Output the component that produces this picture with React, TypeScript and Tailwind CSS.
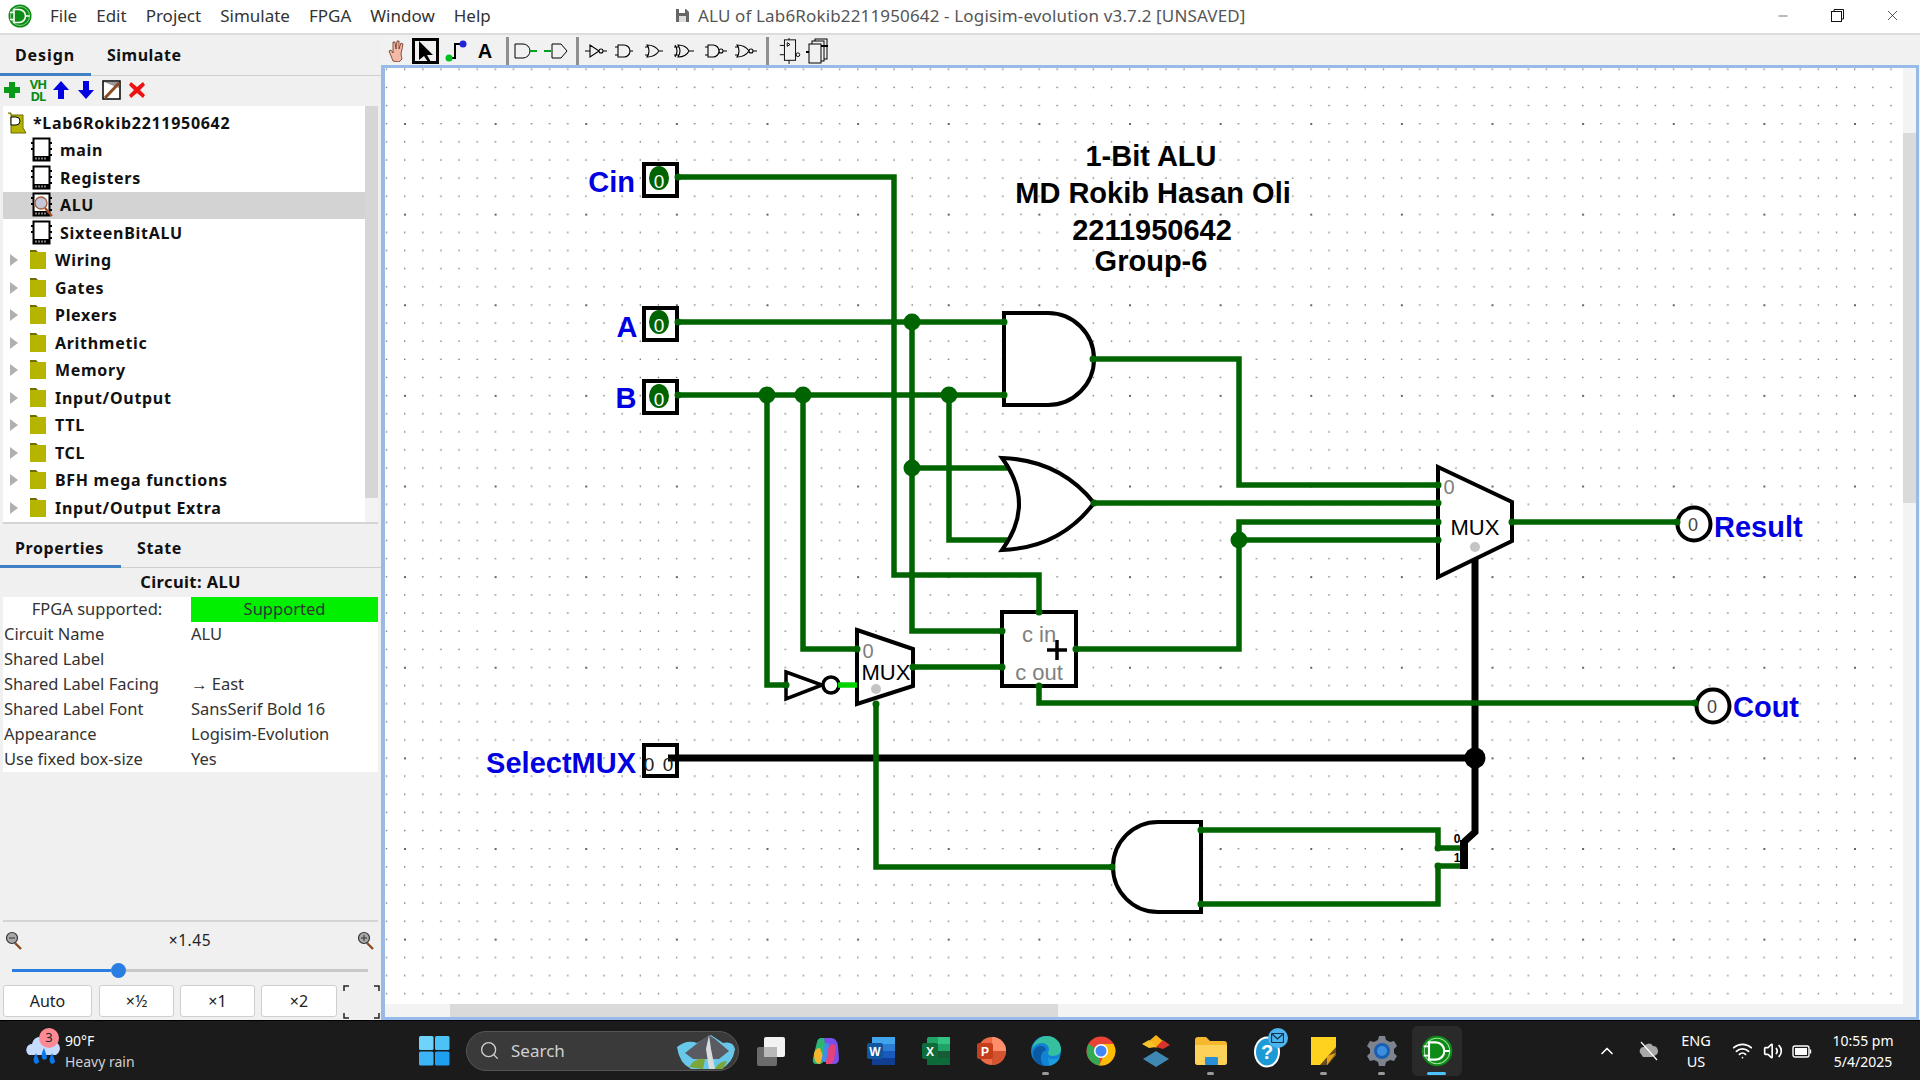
import { ChevronUp, Minus, Search, Volume2, Wifi, X } from "lucide-react";

const MENU = ["File", "Edit", "Project", "Simulate", "FPGA", "Window", "Help"];
const CIRCUITS = ["main", "Registers", "ALU", "SixteenBitALU"];
const LIBS = ["Wiring", "Gates", "Plexers", "Arithmetic", "Memory", "Input/Output", "TTL", "TCL", "BFH mega functions", "Input/Output Extra"];
const PROPS = [
    ["Circuit Name", "ALU"],
    ["Shared Label", ""],
    ["Shared Label Facing", "→ East"],
    ["Shared Label Font", "SansSerif Bold 16"],
    ["Appearance", "Logisim-Evolution"],
    ["Use fixed box-size", "Yes"],
];

const WIRES = [
    "M678 177H894V575H1039V612",
    "M678 322H1004",
    "M678 395H1004",
    "M912 322V631H1002",
    "M912 468H1008",
    "M949 395V540H1008",
    "M767 395V685H786",
    "M803 395V649H857",
    "M913 667H1002",
    "M1076 649H1239V522H1438",
    "M1239 540H1438",
    "M1094 503H1438",
    "M1093 359H1239V485H1438",
    "M1512 522H1677",
    "M1039 686V703H1695",
    "M1201 830H1438V848H1460",
    "M1201 904H1438V866H1460",
];

const JUNCTIONS = [[912, 322], [912, 468], [767, 395], [803, 395], [949, 395], [1239, 540]];
const WIRE_ENDS = [
    [1002, 631], [1002, 667], [913, 667], [857, 649], [1039, 612], [1039, 686], [1076, 649],
    [1438, 485], [1438, 503], [1438, 522], [1438, 540], [1512, 522], [1004, 322], [1004, 395],
    [1093, 359], [1094, 503], [1201, 830], [1201, 904], [1112, 867], [678, 177], [678, 322], [678, 395],
    [876, 704], [1438, 848], [1438, 866], [1677, 522], [1695, 703], [786, 685],
];

function LogisimLogo({ size }: { size: number }) {
    return (
        <svg width={size} height={size} viewBox="0 0 24 24">
            <circle cx="12" cy="12" r="11.5" fill="#0e8a16" />
            <circle cx="12" cy="12" r="9.5" fill="none" stroke="#9fe29f" strokeWidth="0.8" />
            <path d="M6 5.5h5a6.5 6.5 0 0 1 0 13H6z" fill="#0e8a16" stroke="#fff" strokeWidth="1.6" />
            <path d="M2 8.5h4M2 15.5h4M17.5 12h4" stroke="#fff" strokeWidth="1.4" />
        </svg>
    );
}

function ChipIcon({ lens }: { lens?: boolean }) {
    return (
        <svg width="22" height="26" viewBox="0 0 22 26" className="shrink-0">
            <rect x="2.5" y="1.5" width="16" height="22" fill="#fff" stroke="#000" strokeWidth="2" />
            <path d="M0 6h3M0 12h3M18 6h3M18 12h3M18 18h3" stroke="#000" strokeWidth="2" />
            <rect x="2" y="19" width="17" height="5" fill="#000" />
            <path d="M5 20.5v2M8 20.5v2M11 20.5v2M14 20.5v2" stroke="#fff" strokeWidth="1" />
            {lens && <circle cx="10" cy="11" r="6" fill="#c5c8dc" stroke="#a5613a" strokeWidth="1.3" />}
            {lens && <path d="M14 16l7 8" stroke="#a5502a" strokeWidth="2.4" />}
        </svg>
    );
}

function FolderIcon() {
    return (
        <svg width="17" height="20" viewBox="0 0 17 20" className="shrink-0">
            <path d="M0 0h6l2 2H0z" fill="#6f6d00" />
            <rect y="2" width="16" height="17" fill="#b5b500" />
        </svg>
    );
}

function GateIcon({ d, w = 30 }: { d: string; w?: number }) {
    return (
        <svg width={w} height="24" viewBox={`0 0 ${w} 24`} fill="none" stroke="#000" strokeWidth="1.1">
            <path d={d} />
        </svg>
    );
}

function ZoomIcon({ plus }: { plus?: boolean }) {
    return (
        <svg width="18" height="20" viewBox="0 0 18 20">
            <path d="M10 12l6 6" stroke="#8a4b20" strokeWidth="2.4" />
            <circle cx="7" cy="7" r="5.5" fill="#a8a8a8" stroke="#333" strokeWidth="1.2" />
            <path d={plus ? "M4 7h6M7 4v6" : "M4 7h6"} stroke="#333" strokeWidth="1" />
        </svg>
    );
}

function TaskIcon({ children, active, dot }: { children: React.ReactNode; active?: boolean; dot?: boolean }) {
    return (
        <div className={active ? "relative flex items-center justify-center w-[50px] h-[50px] mx-[2.5px] rounded-md bg-[#2a2a2a]" : "relative flex items-center justify-center w-[55px] h-[50px]"}>
            {children}
            {dot && <span className="absolute bottom-[1px] w-[7px] h-[3px] rounded-full bg-[#9a9a9a]" />}
            {active && <span className="absolute bottom-[1px] w-[19px] h-[3px] rounded-full bg-[#4cc2ff]" />}
        </div>
    );
}

function Circuit() {
    return (
        <svg viewBox="385 68 1518 936" className="w-[1518px] h-[936px] block" fontFamily="'Liberation Sans', Arial, sans-serif">
            <defs>
                <pattern id="grid" x="404" y="123" width="90.625" height="90.625" patternUnits="userSpaceOnUse">
                    {[0, 1, 2, 3, 4].flatMap(i => [0, 1, 2, 3, 4].map(j => (
                        <rect key={`${i}-${j}`} x={i * 18.125} y={j * 18.125} width={i + j === 0 ? 2 : 1.4} height={i + j === 0 ? 2 : 1.4} fill={i + j === 0 ? "#666" : "#777"} />
                    )))}
                </pattern>
            </defs>
            <rect x="385" y="68" width="1518" height="936" fill="#fff" />
            <rect x="385" y="68" width="1518" height="936" fill="url(#grid)" />

            {/* bus */}
            <path d="M678 758H1475M1475 557V832L1464 842" fill="none" stroke="#000" strokeWidth="7" />
            <rect x="1460" y="840" width="8" height="29" fill="#000" />
            <circle cx="1475" cy="758" r="10.5" fill="#000" />
            <text x="1457" y="843" fontSize="12" fontWeight="700" textAnchor="middle">0</text>
            <text x="1457" y="862" fontSize="12" fontWeight="700" textAnchor="middle">1</text>

            {/* wires */}
            <path d="M876 704V867H1112" fill="none" stroke="#006400" strokeWidth="5.5" />
            {WIRES.map(d => <path key={d} d={d} fill="none" stroke="#006400" strokeWidth="5.5" />)}
            {JUNCTIONS.map(([x, y]) => <circle key={`${x}-${y}`} cx={x} cy={y} r="8.5" fill="#006400" />)}

            {/* gates */}
            <g fill="#fff" stroke="#000" strokeWidth="4">
                <path d="M1004 313H1048A46 46 0 0 1 1048 405H1004Z" />
                <path d="M1002 458Q1036 504 1002 550Q1060 548 1094 503Q1060 460 1002 458Z" />
                <path d="M1201 822H1158A45 45 0 0 0 1158 912H1201Z" />
                <path d="M857 630L913 649V686L857 704Z" />
                <path d="M1438 467L1512 502V541L1438 577Z" />
                <rect x="1002" y="612" width="74" height="74" />
                <path d="M786 672L822 685L786 699Z" strokeWidth="3.5" />
                <circle cx="831" cy="685" r="8" strokeWidth="3.5" />
                <rect x="644" y="164" width="33" height="32" />
                <rect x="644" y="308" width="33" height="32" />
                <rect x="644" y="381" width="33" height="32" />
                <rect x="644" y="745" width="33" height="31" />
                <circle cx="1694" cy="524" r="16.5" />
                <circle cx="1713" cy="706" r="16.5" />
            </g>
            <path d="M838 685H857" stroke="#00d200" strokeWidth="5.5" />
            <path d="M678 758H668" stroke="#000" strokeWidth="7" />
            {WIRE_ENDS.map(([x, y]) => <circle key={`${x}_${y}`} cx={x} cy={y} r="3.5" fill="#006400" />)}
            <circle cx="876" cy="689" r="5" fill="#c4c4c4" />
            <circle cx="1475" cy="547" r="5" fill="#c4c4c4" />

            {/* pins */}
            {[178, 322, 396].map(y => (
                <g key={y}>
                    <ellipse cx="659" cy={y} rx="10" ry="12" fill="#006400" />
                    <text x="659" y={y + 10} fontSize="19" fill="#fff" textAnchor="middle">0</text>
                </g>
            ))}
            <text x="649" y="771" fontSize="19" fill="#222" textAnchor="middle">0</text>
            <text x="668" y="771" fontSize="19" fill="#222" textAnchor="middle">0</text>
            <text x="1693" y="531" fontSize="18" fill="#444" textAnchor="middle">0</text>
            <text x="1712" y="713" fontSize="18" fill="#444" textAnchor="middle">0</text>

            {/* component labels */}
            <text x="886" y="680" fontSize="22" textAnchor="middle">MUX</text>
            <text x="1475" y="535" fontSize="22" textAnchor="middle">MUX</text>
            <text x="868" y="658" fontSize="20" fill="#808080" textAnchor="middle">0</text>
            <text x="1449" y="494" fontSize="20" fill="#808080" textAnchor="middle">0</text>
            <text x="1039" y="642" fontSize="22" fill="#808080" textAnchor="middle">c in</text>
            <text x="1039" y="680" fontSize="22" fill="#808080" textAnchor="middle">c out</text>
            <path d="M1047 650H1067M1057 640V660" stroke="#000" strokeWidth="3.5" />

            {/* labels */}
            <g fill="#0000e0" fontWeight="700" fontSize="29">
                <text x="635" y="192" textAnchor="end">Cin</text>
                <text x="637.5" y="337" textAnchor="end">A</text>
                <text x="636.5" y="408" textAnchor="end">B</text>
                <text x="636" y="773" textAnchor="end">SelectMUX</text>
                <text x="1714" y="537">Result</text>
                <text x="1733" y="717">Cout</text>
            </g>
            <g fontWeight="700" fontSize="29" textAnchor="middle" fill="#000">
                <text x="1151" y="166">1-Bit ALU</text>
                <text x="1153" y="203">MD Rokib Hasan Oli</text>
                <text x="1152" y="240">2211950642</text>
                <text x="1151" y="271">Group-6</text>
            </g>
        </svg>
    );
}

function TitleBar() {
    return (
        <div className="flex items-center h-[33px] pb-[2px] bg-white text-[17px] text-[#333]">
            <div className="w-[50px] pl-[8px]"><LogisimLogo size={24} /></div>
            <div className="flex gap-[19px] w-[625px]">
                {MENU.map(m => <span key={m}>{m}</span>)}
            </div>
            <div className="flex items-center gap-[8px] tracking-[0.15px] text-[#555]">
                <svg width="15" height="15" viewBox="0 0 15 15"><path d="M1 1h10l3 3v10H1z" fill="#666" /><rect x="4" y="1" width="6" height="4" fill="#fff" /><rect x="4" y="8" width="7" height="6" fill="#ddd" /></svg>
                <span>ALU of Lab6Rokib2211950642 - Logisim-evolution v3.7.2 [UNSAVED]</span>
            </div>
            <div className="ml-auto flex items-center text-[#111]">
                <div className="w-[55px] flex justify-center"><Minus size={14} strokeWidth={1} /></div>
                <div className="w-[55px] flex justify-center">
                    <svg width="13" height="13" viewBox="0 0 13 13" fill="none" stroke="#111"><rect x="0.5" y="2.5" width="10" height="10" /><path d="M3 2.5V.5h9.5v9.5h-2" /></svg>
                </div>
                <div className="w-[55px] pr-[1px] flex justify-center"><X size={17} strokeWidth={1} /></div>
            </div>
        </div>
    );
}

function Sidebar() {
    return (
        <div className="w-[381px] flex flex-col bg-[#f0f0f0] font-['Noto_Sans',sans-serif]">
            <div className="relative flex h-[41px] border-b border-[#cfcfcf] font-bold text-[16px] text-[#111]">
                <span className="absolute left-[15px] top-[8px] tracking-[0.9px]">Design</span>
                <span className="absolute left-[107px] top-[8px] tracking-[0.5px]">Simulate</span>
                <span className="absolute left-0 bottom-[-1px] w-[91px] h-[3px] bg-[#3f7fc4]" />
            </div>
            <div className="flex items-center h-[30px] pb-[2px] pl-[3px]">
                <svg width="18" height="18" viewBox="0 0 18 18" className="mr-[6px]"><path d="M6 1h6v5h5v6h-5v5H6v-5H1V6h5z" fill="#0a9a1a" /></svg>
                <div className="w-[22px] mr-[3px] text-[13px] leading-[12px] font-bold text-[#0a8a1a] tracking-[-1px] text-center">VH<br />DL</div>
                <svg width="18" height="20" viewBox="0 0 18 20" className="mr-[7px]"><path d="M9 1l8 9h-5v9H6v-9H1z" fill="#0000e0" /></svg>
                <svg width="18" height="20" viewBox="0 0 18 20" className="mr-[7px]"><path d="M9 19l8-9h-5V1H6v9H1z" fill="#0000e0" /></svg>
                <svg width="19" height="20" viewBox="0 0 19 20" className="mr-[7px]"><rect x="1" y="1" width="17" height="18" fill="#fff" stroke="#000" strokeWidth="1.5" /><path d="M2 2l15 0 0 6z" fill="#9a9a9a" /><path d="M3 18L17 3" stroke="#8a4b20" strokeWidth="3" /></svg>
                <svg width="18" height="18" viewBox="0 0 18 18"><path d="M3 1l6 5 6-5 2 3-5 5 5 5-2 3-6-5-6 5-2-3 5-5-5-5z" fill="#ee1111" /></svg>
            </div>

            <div className="flex h-[418px] mx-[3px] bg-white border-b-2 border-[#d4d4d4] font-bold text-[16px] tracking-[0.7px] text-[#111]">
                <div className="flex-1 flex flex-col pt-[3px] overflow-hidden">
                    <div className="flex items-center h-[27.5px] pl-[4px] gap-[6px]">
                        <svg width="20" height="22" viewBox="0 0 20 22" className="shrink-0"><path d="M1 1h3v20h15l-3-5V3H4" fill="#b5b500" stroke="#6f6d00" strokeWidth="1" /><path d="M4 5h5a4 4 0 0 1 0 8H4z" fill="#fff" stroke="#000" /></svg>
                        <span>*Lab6Rokib2211950642</span>
                    </div>
                    {CIRCUITS.map(c => (
                        <div key={c} className={c === "ALU" ? "flex items-center h-[27.5px] pl-[28px] gap-[7px] bg-[#d3d3d3]" : "flex items-center h-[27.5px] pl-[28px] gap-[7px]"}>
                            <ChipIcon lens={c === "ALU"} />
                            <span>{c}</span>
                        </div>
                    ))}
                    {LIBS.map(l => (
                        <div key={l} className="flex items-center h-[27.5px] pl-[6px]">
                            <svg width="10" height="14" viewBox="0 0 10 14" className="mr-[11px] shrink-0"><path d="M1 1l8 6-8 6z" fill="#b0b0b0" /></svg>
                            <FolderIcon />
                            <span className="ml-[8px]">{l}</span>
                        </div>
                    ))}
                </div>
                <div className="w-[13px] bg-[#f3f3f3]"><div className="h-[392px] bg-[#d6d6d6]" /></div>
            </div>

            <div className="relative h-[44px] border-b border-[#cfcfcf] font-bold text-[16px] tracking-[0.6px] text-[#111]">
                <span className="absolute left-[15px] top-[12px]">Properties</span>
                <span className="absolute left-[137px] top-[12px]">State</span>
                <span className="absolute left-0 bottom-[-1px] w-[121px] h-[3px] bg-[#3f7fc4]" />
            </div>
            <div className="flex items-center justify-center h-[29px] font-bold text-[16.5px] tracking-[0.4px] text-[#111]">Circuit: ALU</div>

            <div className="flex flex-col h-[325px] mx-[3px] border-b-2 border-[#d4d4d4] text-[16.5px] text-[#333]">
                <div className="bg-white">
                    <div className="grid grid-cols-[188px_1fr] items-center h-[25px]">
                        <span className="text-center">FPGA supported:</span>
                        <span className="h-full flex items-center justify-center bg-[#00f000]">Supported</span>
                    </div>
                    {PROPS.map(([k, v]) => (
                        <div key={k} className="grid grid-cols-[187px_1fr] items-center h-[25px] pl-[1px]">
                            <span>{k}</span>
                            <span>{v}</span>
                        </div>
                    ))}
                </div>
            </div>

            <div className="flex items-center justify-between h-[38px] pl-[5px] pr-[6px] text-[15.5px] text-[#222]">
                <ZoomIcon />
                <span className="tracking-[0.6px]">×1.45</span>
                <ZoomIcon plus />
            </div>
            <div className="flex items-center h-[20px] pl-[12px] pr-[13px]">
                <div className="h-[3px] w-[99px] bg-[#2a7de1]" />
                <div className="w-[15px] h-[15px] rounded-full bg-[#2a7de1] shrink-0" />
                <div className="h-[3px] flex-1 bg-[#c8c8c8]" />
            </div>
            <div className="flex items-start gap-[6px] mt-[5px] pl-[3px] text-[16px] text-[#222]">
                <button className="w-[89px] h-[32px] bg-white border border-[#cfcfcf] rounded-[3px]">Auto</button>
                <button className="w-[75px] h-[32px] ml-[1px] bg-white border border-[#cfcfcf] rounded-[3px]">×½</button>
                <button className="w-[75px] h-[32px] bg-white border border-[#cfcfcf] rounded-[3px]">×1</button>
                <button className="w-[76px] h-[32px] bg-white border border-[#cfcfcf] rounded-[3px]">×2</button>
                <svg width="37" height="34" viewBox="0 0 37 34" fill="none" stroke="#222" strokeWidth="1.5"><path d="M1 6V1h5M36 6V1h-5M1 28v5h5M36 28v5h-5" /></svg>
            </div>
        </div>
    );
}

function Toolbar() {
    return (
        <div className="flex items-center h-[30px] pt-[2px] bg-[#f1f1f1]">
            <div className="w-[30px] flex justify-center">
                <svg width="16" height="22" viewBox="0 0 16 22"><path d="M5 21L1 11l2-1 2 3V2l2 0 1 7 1-8 2 0 0 8 2-6 2 1-2 10 1 5-3 3z" fill="#f3b9a5" stroke="#6b2f1e" strokeWidth="0.8" /></svg>
            </div>
            <div className="w-[27px] h-[26px] ml-[1px] flex items-center justify-center border-[3px] border-black">
                <svg width="17" height="21" viewBox="0 0 17 21"><path d="M2 0l14 14h-6l4 7-3 0-4-6-5 4z" fill="#000" /></svg>
            </div>
            <div className="w-[34px] flex justify-center">
                <svg width="22" height="22" viewBox="0 0 22 22" fill="none"><path d="M4 18h6V4h8" stroke="#000" strokeWidth="2" /><circle cx="4" cy="18" r="3.5" fill="#00c020" /><circle cx="18" cy="4" r="3.5" fill="#2222dd" /></svg>
            </div>
            <div className="w-[24px] text-center text-[20px] font-bold font-['Liberation_Sans',sans-serif]">A</div>
            <div className="w-[9px]" />
            <div className="w-[3px] h-[28px] bg-[#8f8f8f]" />
            <div className="w-[34px] flex justify-center">
                <svg width="24" height="20" viewBox="0 0 24 20" fill="none"><path d="M1 3h8a7 7 0 0 1 0 14H1z" stroke="#000" /><path d="M16 10h7" stroke="#00a020" strokeWidth="2" /></svg>
            </div>
            <div className="w-[26px] flex justify-center">
                <svg width="24" height="20" viewBox="0 0 24 20" fill="none"><path d="M8 3h9l6 7-6 7H8z" stroke="#000" /><path d="M0 10h7" stroke="#00a020" strokeWidth="2" /></svg>
            </div>
            <div className="w-[7px]" />
            <div className="w-[3px] h-[28px] bg-[#8f8f8f]" />
            <div className="w-[2px]" />
            <div className="w-[30px] flex justify-center"><GateIcon w={22} d="M0 12h5M5 6v12l9-6zM14 12a2 2 0 1 0 4 0a2 2 0 1 0-4 0M18 12h4" /></div>
            <div className="w-[26px] flex justify-center"><GateIcon w={18} d="M0 8h3M0 16h3M3 6h6a6 6 0 0 1 0 12H3zM15 12h3" /></div>
            <div className="w-[34px] flex justify-center"><GateIcon w={18} d="M0 8h4M0 16h4M2 6q4 6 0 12q8 0 12-6q-4-6-12-6zM14 12h4" /></div>
            <div className="w-[26px] flex justify-center"><GateIcon w={20} d="M0 8h5M0 16h5M1 6q4 6 0 12M4 6q4 6 0 12q8 0 11-6q-3-6-11-6zM15 12h5" /></div>
            <div className="w-[38px] flex justify-center"><GateIcon w={22} d="M0 8h3M0 16h3M3 6h5a6 6 0 0 1 0 12H3zM14 12a2 2 0 1 0 4 0a2 2 0 1 0-4 0M18 12h4" /></div>
            <div className="w-[22px] flex justify-center"><GateIcon w={22} d="M0 8h4M0 16h4M2 6q4 6 0 12q8 0 12-6q-4-6-12-6zM14 12a2 2 0 1 0 4 0a2 2 0 1 0-4 0M18 12h4" /></div>
            <div className="w-[9px]" />
            <div className="w-[3px] h-[28px] bg-[#8f8f8f]" />
            <div className="w-[6px]" />
            <div className="w-[30px] flex justify-center">
                <svg width="22" height="26" viewBox="0 0 22 28" fill="none" stroke="#000"><rect x="5" y="2" width="12" height="22" /><path d="M0 8h5M0 18h5M10 0v2M10 24v4M17 18h1" /><circle cx="19.5" cy="18" r="2" /><path d="M8 5l3 2-3 2z" /></svg>
            </div>
            <div className="w-[24px] flex justify-center">
                <svg width="22" height="26" viewBox="0 0 22 26" fill="none" stroke="#000"><rect x="9" y="1" width="12" height="20" /><rect x="6" y="3" width="12" height="20" fill="#f1f1f1" /><rect x="3" y="6" width="12" height="19" fill="#f1f1f1" /><path d="M0 14h3M15 8h7" strokeWidth="2" /></svg>
            </div>
        </div>
    );
}

function WeatherIcon() {
    return (
        <svg width="38" height="36" viewBox="0 0 38 36" className="shrink-0">
            <path d="M5 22a6 6 0 0 1 3-11a9 9 0 0 1 17-2a7 7 0 0 1 7 13z" fill="#c5dcff" />
            <path d="M12 20c-2 4-3 6-2 9s5 2 5-1zM20 15c-2 4-3 7-2 10s5 2 5-1zM28 20c-2 4-3 6-2 9s5 2 5-1z" fill="#0c78ee" />
        </svg>
    );
}

function Taskbar() {
    return (
        <div className="flex items-center h-[60px] border-t border-[#000] bg-[#1b1b1b] text-white font-['Noto_Sans',sans-serif]">
            <div className="relative flex items-center w-[419px] pl-[24px] gap-[3px]">
                <WeatherIcon />
                <span className="absolute left-[39px] top-[-2px] w-[20px] h-[20px] rounded-full bg-[#ff8a94] text-[#222] text-[13px] flex items-center justify-center">3</span>
                <div className="flex flex-col text-[14px] leading-[21px]">
                    <span>90°F</span>
                    <span className="text-[#cfcfcf]">Heavy rain</span>
                </div>
            </div>
            <svg width="31" height="30" viewBox="0 0 31 30" className="shrink-0">
                <rect width="14.5" height="14" rx="1.5" fill="#6fd4fb" />
                <rect x="16" width="14.5" height="14" rx="1.5" fill="#4cc2f7" />
                <rect y="15.5" width="14.5" height="14" rx="1.5" fill="#3db4f5" />
                <rect x="16" y="15.5" width="14.5" height="14" rx="1.5" fill="#1f9ff0" />
            </svg>
            <div className="flex items-center w-[273px] h-[40px] ml-[16px] pl-[12px] rounded-full bg-[#3a3a3a] border border-[#555] text-[#d0d0d0] text-[17px]">
                <Search size={21} strokeWidth={1.5} />
                <span className="ml-[11px]">Search</span>
                <svg width="62" height="36" viewBox="0 0 62 36" className="ml-auto mr-[1px]">
                    <path d="M2 14q10-8 20-4l14-8 12 8q10-2 12 6q-2 14-14 20H16Q4 30 2 14z" fill="#69c8ea" />
                    <path d="M10 20L24 9l10-7 6 4 14 12-10 8H18z" fill="#5a5a62" />
                    <path d="M34 2l-3 14 3 20h6l-4-20z" fill="#d8dde0" />
                    <path d="M14 34q6-10 16-8l-2 10zM40 36q4-8 12-8l-4 8z" fill="#7aa63a" />
                </svg>
            </div>
            <div className="flex items-center ml-[4px]">
                <TaskIcon>
                    <svg width="30" height="30" viewBox="0 0 30 30"><rect x="1" y="11" width="20" height="19" rx="2" fill="#6b6b6b" /><rect x="8" y="1" width="21" height="20" rx="2" fill="#f2f2f2" /><rect x="8" y="11" width="13" height="10" fill="#b8b8b8" /></svg>
                </TaskIcon>
                <TaskIcon>
                    <svg width="30" height="30" viewBox="0 0 30 30">
                        <path d="M10 2h7l-4 22q-1 4-5 4H5Q1 28 2 22L6 6q1-4 4-4z" fill="#2bb673" />
                        <path d="M3 20q0-8 6-8l3 8-3 8q-5 0-6-8z" fill="#f5b52e" />
                        <path d="M13 2h7q6 0 7 8l1 12q0 6-5 6h-6z" fill="#7a4ee8" />
                        <path d="M20 8q-6 6-5 20h3q4 0 5-4l2-12q0-4-5-4z" fill="#e5417c" />
                        <path d="M14 8l-3 14q-1 4 3 4h1l3-18q-2-2-4 0z" fill="#3a8ef0" />
                    </svg>
                </TaskIcon>
                <TaskIcon>
                    <svg width="30" height="30" viewBox="0 0 30 30"><rect x="6" y="1" width="23" height="28" rx="2" fill="#2b7cd3" /><rect x="6" y="1" width="23" height="7" fill="#41a5ee" /><rect x="6" y="15" width="23" height="7" fill="#185abd" /><rect x="6" y="22" width="23" height="7" fill="#103f91" /><rect x="1" y="7" width="16" height="16" rx="2" fill="#11559f" /><text x="9" y="20" fontSize="12" fontWeight="700" fill="#fff" textAnchor="middle" fontFamily="'Liberation Sans'">W</text></svg>
                </TaskIcon>
                <TaskIcon>
                    <svg width="30" height="30" viewBox="0 0 30 30"><rect x="6" y="1" width="23" height="28" rx="2" fill="#21a366" /><rect x="17" y="1" width="12" height="7" fill="#33c481" /><rect x="6" y="15" width="11" height="7" fill="#107c41" /><rect x="17" y="15" width="12" height="7" fill="#185c37" /><rect x="6" y="22" width="23" height="7" fill="#0f6a3a" /><rect x="1" y="7" width="16" height="16" rx="2" fill="#0e6b3a" /><text x="9" y="20" fontSize="12" fontWeight="700" fill="#fff" textAnchor="middle" fontFamily="'Liberation Sans'">X</text></svg>
                </TaskIcon>
                <TaskIcon>
                    <svg width="30" height="30" viewBox="0 0 30 30"><circle cx="16" cy="15" r="14" fill="#ed6c47" /><path d="M16 1a14 14 0 0 1 14 14H16z" fill="#ff8f6b" /><path d="M16 15h14a14 14 0 0 1-14 14z" fill="#d35230" /><rect x="1" y="7" width="16" height="16" rx="2" fill="#c43e1c" /><text x="9" y="20" fontSize="12" fontWeight="700" fill="#fff" textAnchor="middle" fontFamily="'Liberation Sans'">P</text></svg>
                </TaskIcon>
                <TaskIcon dot>
                    <svg width="32" height="32" viewBox="0 0 32 32">
                        <circle cx="16" cy="16" r="15" fill="#1283d4" />
                        <path d="M2 14C4 5 11 1 17 1c8 0 14 6 14 13 0 4-3 7-8 7-3 0-5-1-5-3 0-1 1-2 1-4 0-3-3-6-7-6-5 0-8 3-10 6z" fill="#35c1a0" />
                        <path d="M14 31C8 30 3 25 3 19c0-5 4-8 8-8 3 0 5 2 5 4-6 2-7 10-2 16z" fill="#0c59a4" />
                        <path d="M30 22c-2 6-8 9-13 9 4 0 1-4 1-9 2 3 8 3 12 0z" fill="#1b9de2" />
                    </svg>
                </TaskIcon>
                <TaskIcon>
                    <svg width="30" height="30" viewBox="0 0 30 30">
                        <circle cx="15" cy="15" r="14.5" fill="#ea4335" />
                        <path d="M15 15L2.5 8A14.5 14.5 0 0 0 13 29.4z" fill="#34a853" />
                        <path d="M15 8h12.5A14.5 14.5 0 0 1 13 29.4L20 15z" fill="#fbbc05" />
                        <circle cx="15" cy="15" r="7" fill="#fff" />
                        <circle cx="15" cy="15" r="5.5" fill="#4285f4" />
                    </svg>
                </TaskIcon>
                <TaskIcon>
                    <svg width="30" height="32" viewBox="0 0 30 32"><path d="M15 0l7 6-7 7-7-7z" fill="#f7b21a" /><path d="M8 5l7 7-7 1-7-4z" fill="#f7c52a" /><path d="M22 5l7 5-7 4-7-2z" fill="#d8342a" /><path d="M15 16l13 8-13 8-13-8z" fill="#3f88b4" /></svg>
                </TaskIcon>
                <TaskIcon dot>
                    <svg width="32" height="28" viewBox="0 0 32 28"><path d="M0 3q0-3 3-3h8l4 4h14q3 0 3 3v18q0 3-3 3H3q-3 0-3-3z" fill="#f5b82e" /><path d="M0 8h32v17q0 3-3 3H3q-3 0-3-3z" fill="#fcd25a" /><rect x="10" y="20" width="13" height="8" rx="1" fill="#2a8fd8" /></svg>
                </TaskIcon>
                <div className="w-[3px]" />
                <TaskIcon>
                    <div className="relative">
                        <svg width="32" height="34" viewBox="0 0 32 34"><ellipse cx="14" cy="18" rx="13" ry="15.5" fill="#fff" /><ellipse cx="14" cy="18" rx="11" ry="13.5" fill="#1c9ad6" /><text x="14" y="25" fontSize="20" fontWeight="700" fill="#fff" textAnchor="middle" fontFamily="'Liberation Sans'">?</text></svg>
                        <span className="absolute right-[-3px] top-[-6px] w-[20px] h-[20px] rounded-full bg-[#4db4ee] flex items-center justify-center">
                            <svg width="13" height="10" viewBox="0 0 13 10" fill="none" stroke="#12334a" strokeWidth="1.2"><rect x="0.5" y="0.5" width="12" height="9" rx="1" /><path d="M1 1l5.5 5L12 1" /></svg>
                        </span>
                    </div>
                </TaskIcon>
                <TaskIcon dot>
                    <svg width="27" height="28" viewBox="0 0 27 28"><path d="M1 0h25v18l-9 10H1z" fill="#ffd21f" /><path d="M26 10v8l-9 10H10z" fill="#6a4c1a" /><path d="M26 16l-9 12v-9z" fill="#e0a31a" /></svg>
                </TaskIcon>
                <div className="w-[3px]" />
                <TaskIcon dot>
                    <svg width="32" height="32" viewBox="0 0 32 32">
                        <path d="M13 1h6l1 4 4 2 4-1 3 5-3 3v4l3 3-3 5-4-1-4 2-1 4h-6l-1-4-4-2-4 1-3-5 3-3v-4L1 11l3-5 4 1 4-2z" fill="#7d8490" />
                        <circle cx="16" cy="16" r="8" fill="#1a5fb4" />
                        <circle cx="16" cy="16" r="5" fill="#3e8ee0" />
                    </svg>
                </TaskIcon>
                <TaskIcon active>
                    <LogisimLogo size={32} />
                </TaskIcon>
            </div>
            <div className="ml-auto flex items-center text-[14px]">
                <ChevronUp size={20} />
                <svg width="22" height="20" viewBox="0 0 22 20" className="ml-[21px]"><path d="M3 13a4 4 0 0 1 3-7a5 5 0 0 1 9-1a5 5 0 0 1 3 9l-4 2H5z" fill="#a8a8a8" /><path d="M3 1l16 18" stroke="#fff" strokeWidth="1.2" /></svg>
                <div className="w-[60px] ml-[6px] flex flex-col items-center leading-[21px] text-[14.5px]"><span>ENG</span><span>US</span></div>
                <Wifi size={21} className="ml-[6px]" />
                <Volume2 size={20} className="ml-[10px]" />
                <svg width="20" height="16" viewBox="0 0 20 16" className="ml-[9px]" fill="none" stroke="#fff" strokeWidth="1.4"><rect x="1" y="3" width="16" height="11" rx="2" /><path d="M18.5 6.5v4" /><rect x="3" y="5" width="12" height="7" fill="#fff" stroke="none" /></svg>
                <div className="w-[86px] ml-[8px] mr-[14px] flex flex-col items-center leading-[21px] text-[14px]"><span>10:55 pm</span><span>5/4/2025</span></div>
            </div>
        </div>
    );
}

export default function App() {
    return (
        <div className="w-[1920px] h-[1080px] flex flex-col overflow-hidden bg-white font-['Noto_Sans',sans-serif]">
            <TitleBar />
            <div className="h-[2px] bg-[#dcdcdc]" />
            <div className="flex flex-1 min-h-0">
                <Sidebar />
                <div className="flex-1 flex flex-col bg-[#f1f1f1]">
                    <Toolbar />
                    <div className="flex-1 flex flex-col mr-[1px] border-[3px] border-l-4 border-[#96bbe8] bg-white">
                        <div className="flex flex-1 min-h-0">
                            <Circuit />
                            <div className="flex-1 bg-[#f3f3f3]"><div className="mt-[65px] h-[370px] bg-[#dadada]" /></div>
                        </div>
                        <div className="h-[13px] bg-[#f3f3f3]"><div className="ml-[65px] w-[608px] h-full bg-[#dadada]" /></div>
                    </div>
                </div>
            </div>
            <Taskbar />
        </div>
    );
}
